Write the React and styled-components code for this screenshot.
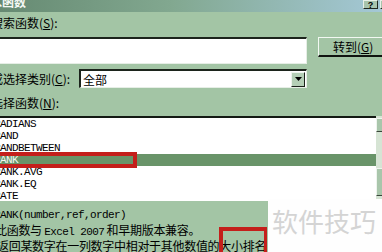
import React from "react";
import styled, { createGlobalStyle } from "styled-components";

const Global = createGlobalStyle`
  html, body { margin: 0; padding: 0; background: #fff; overflow: hidden; }
  #root { width: 382px; height: 252px; }
`;

const Frame = styled.div`
  position: relative;
  width: 382px;
  height: 252px;
  overflow: hidden;
  background: #a3c5a5;
  font-family: "Noto Sans CJK SC", sans-serif;
  font-size: 12px;
  color: #000;
`;

const TitleBar = styled.div`
  height: 12px;
  display: flex;
  align-items: flex-start;
  justify-content: space-between;
  background: linear-gradient(90deg, #668a72 0%, #82a890 45%, #a4c8d6 100%);
`;

const TitleText = styled.div`
  margin-left: -22px;
  margin-top: -4px;
  color: #f4f8f4;
  font-weight: bold;
  font-size: 12px;
  line-height: 12px;
  white-space: nowrap;
`;

const TitleButtons = styled.div`
  display: flex;
  gap: 2px;
  margin-right: -12px;
`;

const CapButton = styled.div`
  width: ${(p) => p.$w}px;
  height: 9px;
  box-sizing: border-box;
  background: #a8c4ac;
  border-top: 1px solid #e8f0e8;
  border-left: 1px solid #e8f0e8;
  border-right: 1px solid #202820;
  border-bottom: 1px solid #202820;
  font: bold 9px/8px "Liberation Sans", sans-serif;
  text-align: center;
  color: #000;
`;

const Panel = styled.div`
  margin-left: -9px;
  width: 402px;
  display: flex;
  flex-direction: column;
`;

const Label = styled.div`
  height: 14px;
  line-height: 14px;
  margin-top: ${(p) => p.$mt}px;
  white-space: nowrap;
`;

const Key = styled.span`
  text-decoration: underline;
  text-underline-offset: 1px;
`;

const Row = styled.div`
  display: flex;
  align-items: ${(p) => p.$align || "flex-start"};
  margin-top: ${(p) => p.$mt}px;
  gap: ${(p) => p.$gap || 0}px;
`;

const Sunken = styled.div`
  box-sizing: border-box;
  background: #fff;
  border-top: 2px solid #1c241c;
  border-left: 2px solid #1c241c;
  border-right: 1px solid #e6eee6;
  border-bottom: 1px solid #e6eee6;
`;

const SearchInput = styled(Sunken)`
  width: 316px;
  height: 27px;
`;

const GoButton = styled.div`
  box-sizing: border-box;
  width: 72px;
  height: 20px;
  background: #a3c5a5;
  border-top: 1px solid #f2f8f2;
  border-left: 1px solid #f2f8f2;
  border-right: 2px solid #101410;
  border-bottom: 2px solid #101410;
  line-height: 17px;
  padding-left: 14px;
  white-space: nowrap;
`;

const CategoryLabel = styled.div`
  width: 88px;
  line-height: 14px;
  white-space: nowrap;
`;

const Select = styled(Sunken)`
  width: 228px;
  height: 19px;
  display: flex;
  align-items: center;
  justify-content: space-between;
  padding-left: 2px;
  line-height: 15px;
`;

const DropButton = styled.div`
  box-sizing: border-box;
  width: 14px;
  height: 15px;
  margin-right: 1px;
  background: #b4cfb6;
  border-top: 1px solid #eef4ee;
  border-left: 1px solid #eef4ee;
  border-right: 1px solid #1a201a;
  border-bottom: 1px solid #1a201a;
  display: flex;
  align-items: center;
  justify-content: center;
`;

const ListRow = styled.div`
  display: flex;
  margin-top: 6px;
  height: 85px;
`;

const List = styled.div`
  width: 385px;
  height: 85px;
  box-sizing: border-box;
  background: #fff;
  border-top: 2px solid #141a14;
  overflow: hidden;
`;

const Item = styled.div`
  position: relative;
  height: 12px;
  line-height: 12px;
  padding-left: 3px;
  font-family: "Liberation Mono", monospace;
  font-size: 11px;
  letter-spacing: -0.6px;
  white-space: nowrap;
  background: ${(p) => (p.$sel ? "#699469" : "transparent")};
  color: ${(p) => (p.$sel ? "#f4f8f4" : "#000")};
`;

const RedMark = styled.div`
  position: absolute;
  left: 0;
  top: -2px;
  width: 146px;
  height: 16px;
  box-sizing: border-box;
  border: 4px solid #c41f1b;
`;

const ScrollBar = styled.div`
  width: 17px;
  display: flex;
  flex-direction: column;
  background: #d6e4d4;
  padding-top: 2px;
`;

const ScrollPart = styled.div`
  box-sizing: border-box;
  height: ${(p) => p.$h}px;
  margin-top: ${(p) => p.$mt || 0}px;
  background: #a9c6ab;
  border-top: 1px solid #eef4ee;
  border-left: 1px solid #eef4ee;
  border-bottom: 1px solid #3a463a;
`;

const Desc = styled.div`
  padding-top: 5px;
  line-height: 13.5px;
  white-space: nowrap;
  letter-spacing: -0.3px;
`;

const Mono = styled.span`
  font-family: "Liberation Mono", monospace;
  font-size: 11px;
  letter-spacing: -0.6px;
`;

const DescLine = styled.div`
  padding-left: ${(p) => p.$pl}px;
`;

const Watermark = styled.div`
  position: absolute;
  left: 268px;
  top: 199px;
  right: 0;
  bottom: 0;
  background: #fefefe;
  color: #d4d4d4;
  font-family: "Noto Sans CJK SC", sans-serif;
  font-size: 26px;
  line-height: 26px;
  padding: 9px 0 0 4px;
  white-space: nowrap;
`;

const NoteBox = styled.div`
  position: absolute;
  left: 219px;
  top: 227px;
  width: 48px;
  height: 32px;
  box-sizing: border-box;
  border: 4px solid #c41f1b;
  border-right-width: 3px;
`;

const items = ["RADIANS", "RAND", "RANDBETWEEN", "RANK", "RANK.AVG", "RANK.EQ", "RATE"];

export default function App() {
  return (
    <>
      <Global />
      <Frame>
        <TitleBar>
          <TitleText>插入函数</TitleText>
          <TitleButtons>
            <CapButton $w={15}>?</CapButton>
            <CapButton $w={14}>×</CapButton>
          </TitleButtons>
        </TitleBar>
        <Panel>
          <Label $mt={4}>
            搜索函数(<Key>S</Key>):
          </Label>
          <Row $mt={7} $gap={11}>
            <SearchInput />
            <GoButton>
              转到(<Key>G</Key>)
            </GoButton>
          </Row>
          <Row $mt={5} $align="center">
            <CategoryLabel>
              或选择类别(<Key>C</Key>):
            </CategoryLabel>
            <Select>
              <span>全部</span>
              <DropButton>
                <svg width="7" height="4" viewBox="0 0 7 4">
                  <path d="M0 0h7L3.5 4z" fill="#000" />
                </svg>
              </DropButton>
            </Select>
          </Row>
          <Label $mt={8}>
            选择函数(<Key>N</Key>):
          </Label>
          <ListRow>
            <List>
              {items.map((it) => (
                <Item key={it} $sel={it === "RANK"}>
                  {it}
                  {it === "RANK" && <RedMark />}
                </Item>
              ))}
            </List>
            <ScrollBar>
              <ScrollPart $h={14} />
              <ScrollPart $h={28} $mt={36} />
            </ScrollBar>
          </ListRow>
          <Desc>
            <DescLine $pl={3}>
              <Mono>RANK(number,ref,order)</Mono>
            </DescLine>
            <DescLine $pl={4}>
              此函数与 <Mono>Excel 2007</Mono> 和早期版本兼容。
            </DescLine>
            <DescLine $pl={6}>返回某数字在一列数字中相对于其他数值的大小排名</DescLine>
          </Desc>
        </Panel>
        <Watermark>软件技巧</Watermark>
        <NoteBox />
      </Frame>
    </>
  );
}
